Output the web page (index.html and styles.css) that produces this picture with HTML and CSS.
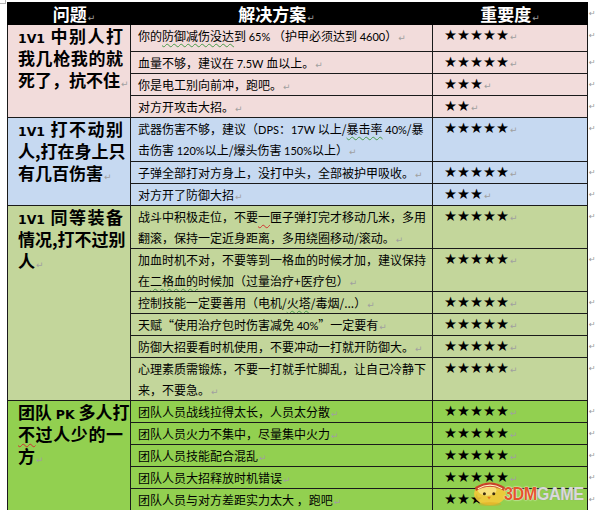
FILE: index.html
```html
<!DOCTYPE html>
<html lang="zh-CN">
<head>
<meta charset="utf-8">
<title>问题与解决方案</title>
<link rel="stylesheet" href="styles.css">
</head>
<body>
<div class="page">
  <span class="corner"></span>
  <table class="tips">
    <colgroup>
      <col class="w1"><col class="w2"><col class="w3"><col class="w4">
    </colgroup>
    <thead>
      <tr>
        <th class="h1">问题<span class="pm">↵</span></th>
        <th class="h2">解决方案<span class="pm">↵</span></th>
        <th>重要度<span class="pm">↵</span></th>
        <td class="end">↵</td>
      </tr>
    </thead>
    <tbody class="g1">
      <tr class="r27">
        <td class="q" rowspan="4">
          <span class="ln full"><span class="v">1V1</span> 中别人打</span>
          <span class="ln full">我几枪我的就</span>
          <span class="ln">死了，抗不住<span class="pm">↵</span></span>
        </td>
        <td class="a">你的<span class="sg">防御减伤没达</span>到 <span class="en">65%</span> （护甲必须达到 <span class="en">4600</span>）<span class="pm">↵</span></td>
        <td class="s">★★★★★<span class="pm">↵</span></td>
        <td class="end">↵</td>
      </tr>
      <tr>
        <td class="a">血量不够，建议在 <span class="en">7.5W</span> 血以上。<span class="pm">↵</span></td>
        <td class="s">★★★★★<span class="pm">↵</span></td>
        <td class="end">↵</td>
      </tr>
      <tr>
        <td class="a">你是电工别向前冲，跑吧。<span class="pm">↵</span></td>
        <td class="s">★★★<span class="pm">↵</span></td>
        <td class="end">↵</td>
      </tr>
      <tr>
        <td class="a">对方开攻击大招。<span class="pm">↵</span></td>
        <td class="s">★★<span class="pm">↵</span></td>
        <td class="end">↵</td>
      </tr>
    </tbody>
    <tbody class="g2">
      <tr class="r44">
        <td class="q" rowspan="3">
          <span class="ln full"><span class="v">1V1</span> 打不动别</span>
          <span class="ln full">人,打在身上只</span>
          <span class="ln">有几百伤害<span class="pm">↵</span></span>
        </td>
        <td class="a">武器伤害不够，建议（<span class="en">DPS</span>：<span class="en">17W</span> 以上/<span class="sg">暴击率</span> <span class="en">40%</span>/暴<br>击伤害 <span class="en">120%</span>以上/爆头伤害 <span class="en">150%</span>以上）<span class="pm">↵</span></td>
        <td class="s">★★★★★<span class="pm">↵</span></td>
        <td class="end">↵</td>
      </tr>
      <tr>
        <td class="a">子弹全部打对方身上，没打中头，全部被护甲吸收。<span class="pm">↵</span></td>
        <td class="s">★★★★★<span class="pm">↵</span></td>
        <td class="end">↵</td>
      </tr>
      <tr>
        <td class="a">对方开了防御大招<span class="pm">↵</span></td>
        <td class="s">★★★<span class="pm">↵</span></td>
        <td class="end">↵</td>
      </tr>
    </tbody>
    <tbody class="g3">
      <tr class="r41">
        <td class="q" rowspan="6">
          <span class="ln full"><span class="v">1V1</span> 同等装备</span>
          <span class="ln full">情况,打不过别</span>
          <span class="ln">人<span class="pm">↵</span></span>
        </td>
        <td class="a">战斗中积极走位，不要<span class="sr">一</span>匣子弹打完才移动几米，多用<br>翻滚，保持一定近身距离，多用绕圈移动/滚动。<span class="pm">↵</span></td>
        <td class="s">★★★★★<span class="pm">↵</span></td>
        <td class="end">↵</td>
      </tr>
      <tr class="r43">
        <td class="a">加血时机不对，不要等到一格血的时候才加，建议保持<br>在<span class="sg">二格血的</span>时候加（过量治疗+医疗包）<span class="pm">↵</span></td>
        <td class="s">★★★★★<span class="pm">↵</span></td>
        <td class="end">↵</td>
      </tr>
      <tr class="r21">
        <td class="a">控制技能一定要善用（电机/<span class="sg">火塔</span>/毒烟/...）<span class="pm">↵</span></td>
        <td class="s">★★★★★<span class="pm">↵</span></td>
        <td class="end">↵</td>
      </tr>
      <tr>
        <td class="a">天赋“使用治疗包时伤害减免 <span class="en">40%</span>”一定要有<span class="pm">↵</span></td>
        <td class="s">★★★★★<span class="pm">↵</span></td>
        <td class="end">↵</td>
      </tr>
      <tr>
        <td class="a">防御大招要看时机使用，不要冲动一打就开防御大。<span class="pm">↵</span></td>
        <td class="s">★★★★★<span class="pm">↵</span></td>
        <td class="end">↵</td>
      </tr>
      <tr class="r42">
        <td class="a">心理素质需锻炼，不要一打就手忙脚乱，让自己冷静下<br>来，不要急。<span class="pm">↵</span></td>
        <td class="s">★★★★★<span class="pm">↵</span></td>
        <td class="end">↵</td>
      </tr>
    </tbody>
    <tbody class="g4">
      <tr>
        <td class="q" rowspan="5">
          <span class="ln full">团队 <span class="v">PK</span> 多人打</span>
          <span class="ln full"><span class="sr">不</span>过人少的一</span>
          <span class="ln">方<span class="pm">↵</span></span>
        </td>
        <td class="a">团队人员战线拉得太长，人员太分散<span class="pm">↵</span></td>
        <td class="s">★★★★★<span class="pm">↵</span></td>
        <td class="end">↵</td>
      </tr>
      <tr>
        <td class="a">团队人员火力不集中，尽量集中火力<span class="pm">↵</span></td>
        <td class="s">★★★★★<span class="pm">↵</span></td>
        <td class="end">↵</td>
      </tr>
      <tr>
        <td class="a">团队人员技能配合混乱<span class="pm">↵</span></td>
        <td class="s">★★★★★<span class="pm">↵</span></td>
        <td class="end">↵</td>
      </tr>
      <tr>
        <td class="a">团队人员大招释放时机错误<span class="pm">↵</span></td>
        <td class="s">★★★★★<span class="pm">↵</span></td>
        <td class="end">↵</td>
      </tr>
      <tr>
        <td class="a">团队人员与对方差距实力太大 ，跑吧<span class="pm">↵</span></td>
        <td class="s">★★★<span class="pm">↵</span></td>
        <td class="end">↵</td>
      </tr>
    </tbody>
  </table>
  <div class="wm">
    <svg class="chick" width="38" height="30" viewBox="0 0 40 32">
      <ellipse cx="20" cy="19" rx="17" ry="12" fill="#f3c93a" opacity="0.92"/>
      <ellipse cx="17" cy="15" rx="10" ry="6" fill="#fbe58a" opacity="0.8"/>
      <path d="M4 12 Q20 2 36 12 L35 16 Q20 7 5 16 Z" fill="#c8432a"/>
      <path d="M7 13.5 Q20 6 33 13.5" stroke="#fff3c0" stroke-width="1.2" fill="none"/>
      <circle cx="14" cy="19" r="1.6" fill="#3a2a10"/>
      <circle cx="24" cy="19" r="1.6" fill="#3a2a10"/>
      <path d="M17 22 L19 25 L21 22 Z" fill="#e07a1f"/>
      <ellipse cx="20" cy="30" rx="12" ry="2" fill="#d9a520" opacity="0.5"/>
    </svg>
    <span class="brand"><span class="b3">3DM</span><span class="bg">GAME</span></span>
  </div>
</div>
</body>
</html>
```
FILE: styles.css
```css
html, body {
  margin: 0;
  padding: 0;
  background: #ffffff;
}

body {
  font-family: "Noto Sans CJK SC", "Noto Sans", sans-serif;
  color: #000;
}

.page {
  position: relative;
  padding: 2px 0 0 7px;
  width: 588px;
  height: 508px;
  overflow: hidden;
}

.corner {
  position: absolute;
  left: 0;
  top: 0;
  width: 5px;
  height: 3px;
  border-right: 1px solid #b5b5b5;
  border-bottom: 1px solid #b5b5b5;
}

.tips {
  border-collapse: collapse;
  table-layout: fixed;
  width: 588px;
}

.w1 { width: 123px; }
.w2 { width: 302px; }
.w3 { width: 155px; }
.w4 { width: 8px; }

.tips th {
  background: #000;
  color: #fff;
  font-size: 17px;
  font-weight: 700;
  line-height: 21px;
  height: 21px;
  padding: 0;
  text-align: center;
  border: 1px solid #000;
  overflow: hidden;
}

.tips th.h1 { padding-left: 10px; }
.tips th.h2 { padding-right: 10px; }

.tips td {
  border: 1px solid #1a1a1a;
  padding: 0;
  vertical-align: top;
  line-height: 21px;
  height: 21px;
  font-size: 12px;
  white-space: nowrap;
  overflow: hidden;
}

.tips td.end {
  border: none;
  background: #fff;
  color: #9a9a9a;
  font-family: "DejaVu Sans", sans-serif;
  font-size: 8px;
  padding-left: 1px;
}

.g1 td { background: #f2dcdb; }
.g2 td { background: #c6d9f1; }
.g3 td { background: #c3d69b; }
.g4 td { background: #92d050; }

.r27 td { height: 26px; }
.r44 td { height: 43px; }
.r41 td { height: 40px; }
.r43 td { height: 42px; }
.r42 td { height: 41px; }
.r21 td { height: 20px; }

.tips td.q {
  padding: 0 7px 0 10px;
  font-size: 17px;
  font-weight: 700;
  line-height: 22px;
  white-space: normal;
}

.ln {
  display: block;
  white-space: nowrap;
  height: 22px;
}

.ln.full {
  text-align: justify;
  text-align-last: justify;
}

.v {
  font-family: "DejaVu Sans", sans-serif;
  font-size: 12.5px;
  font-weight: 700;
  line-height: 1;
}

.tips td.a {
  padding-left: 7px;
}

.tips td.s {
  padding-left: 11px;
  font-family: "DejaVu Sans", sans-serif;
  font-size: 14.5px;
}

.en {
  font-family: Lato, "Liberation Sans", sans-serif;
  font-size: 11px;
  line-height: 1;
}

.pm {
  color: #a0a0a0;
  font-family: "DejaVu Sans", sans-serif;
  font-size: 9px;
  font-weight: 400;
  padding-left: 1px;
  line-height: 1;
}

.sg {
  text-decoration: underline wavy #4a9a4a;
  text-decoration-thickness: 1px;
  text-underline-offset: 2px;
}

.sr {
  text-decoration: underline wavy #d03030;
  text-decoration-thickness: 1px;
  text-underline-offset: 2px;
}

.wm {
  position: absolute;
  left: 471px;
  top: 476px;
  display: flex;
  align-items: center;
}

.chick {
  display: block;
}

.brand {
  display: block;
  font-family: "Liberation Sans", sans-serif;
  font-weight: 700;
  font-size: 19px;
  letter-spacing: -0.5px;
  margin-left: -5px;
  margin-top: 6px;
  transform: scaleX(0.85);
  transform-origin: left center;
}

.b3 {
  color: #e4552a;
  text-shadow: 0 0 1px #fff, 0 0 2px #fff;
}

.bg {
  color: #d9d9d9;
  text-shadow: 0 0 1px #8a8a8a;
}
```
